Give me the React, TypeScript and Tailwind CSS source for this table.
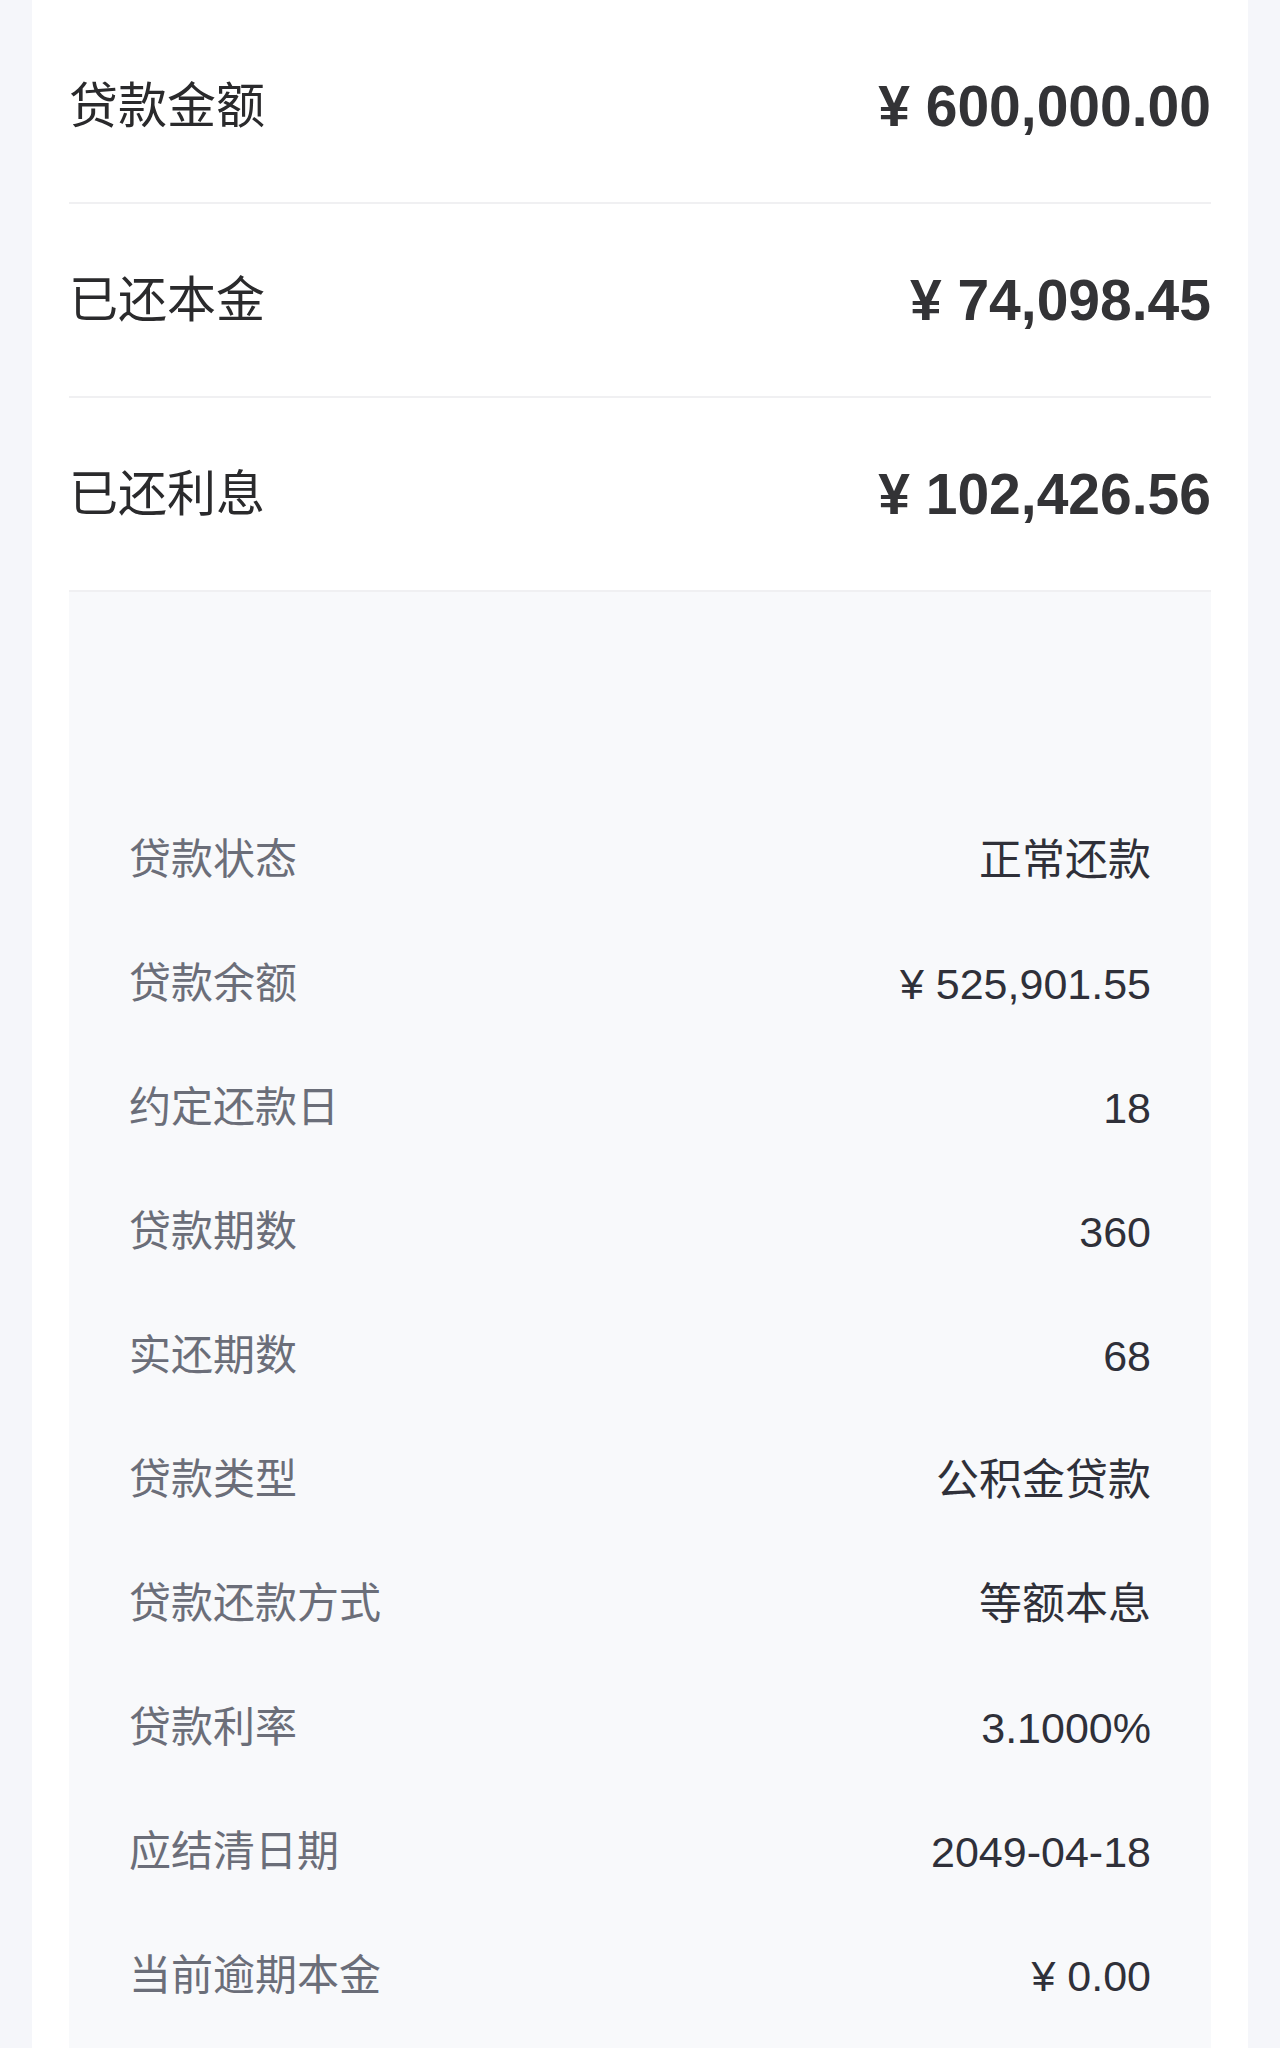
const summary = [
  { label: "贷款金额", value: "¥ 600,000.00" },
  { label: "已还本金", value: "¥ 74,098.45" },
  { label: "已还利息", value: "¥ 102,426.56" },
];

const details = [
  { label: "贷款状态", value: "正常还款" },
  { label: "贷款余额", value: "¥ 525,901.55" },
  { label: "约定还款日", value: "18" },
  { label: "贷款期数", value: "360" },
  { label: "实还期数", value: "68" },
  { label: "贷款类型", value: "公积金贷款" },
  { label: "贷款还款方式", value: "等额本息" },
  { label: "贷款利率", value: "3.1000%" },
  { label: "应结清日期", value: "2049-04-18" },
  { label: "当前逾期本金", value: "¥ 0.00" },
];

export default function App() {
  return (
    <div className="min-h-screen bg-[#f5f6fa] px-[32px] font-['Liberation_Sans','Noto_Sans_CJK_SC',sans-serif]">
      <div className="bg-white px-[37px] pt-[10px] min-h-screen">
        {/* 汇总 */}
        {summary.map((row) => (
          <div
            key={row.label}
            className="flex h-[194px] items-center justify-between border-b-2 border-[#f0f0f2]"
          >
            <span className="text-[49px] text-[#2a2a2c] leading-none">
              {row.label}
            </span>
            <span className="text-[57px] font-semibold text-[#333336] leading-none">
              {row.value}
            </span>
          </div>
        ))}

        {/* 明细 */}
        <div className="bg-[#f8f9fb] px-[60px] pt-[206px] pb-[40px]">
          {details.map((row) => (
            <div
              key={row.label}
              className="flex h-[124px] items-center justify-between"
            >
              <span className="text-[42px] text-[#6b6e79] leading-none">
                {row.label}
              </span>
              <span className="text-[43px] text-[#2f3039] leading-none">
                {row.value}
              </span>
            </div>
          ))}
        </div>
      </div>
    </div>
  );
}
